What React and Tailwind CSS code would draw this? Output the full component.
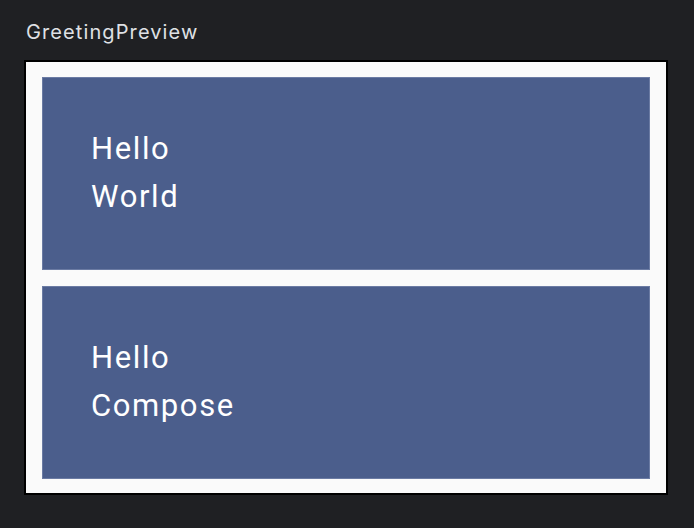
export default function App() {
  const greetings = ['World', 'Compose']

  return (
    <div className="w-[694px] h-[528px] bg-[#1f2023] pl-6 pt-[19px]" style={{ fontFamily: 'Inter, "Noto Sans", sans-serif' }}>
      <div className="h-[26px] pl-[2px] text-[20px] leading-[26px] tracking-[1.1px] text-[#dfe1e5]">GreetingPreview</div>
      <div className="mt-[15px] w-[644px] h-[435px] border-2 border-black bg-[#fafafa] px-4 pt-[15px] flex flex-col gap-4">
        {greetings.map((name) => (
          <div
            key={name}
            className="h-[193px] border border-[#6b7ba3] bg-[#4b5e8c] pl-[48px] pt-[47px] text-white text-[31px] leading-[48px] tracking-[1.6px]"
            style={{ fontFamily: 'Roboto, "Liberation Sans", sans-serif' }}
          >
            <div>Hello</div>
            <div>{name}</div>
          </div>
        ))}
      </div>
    </div>
  )
}
